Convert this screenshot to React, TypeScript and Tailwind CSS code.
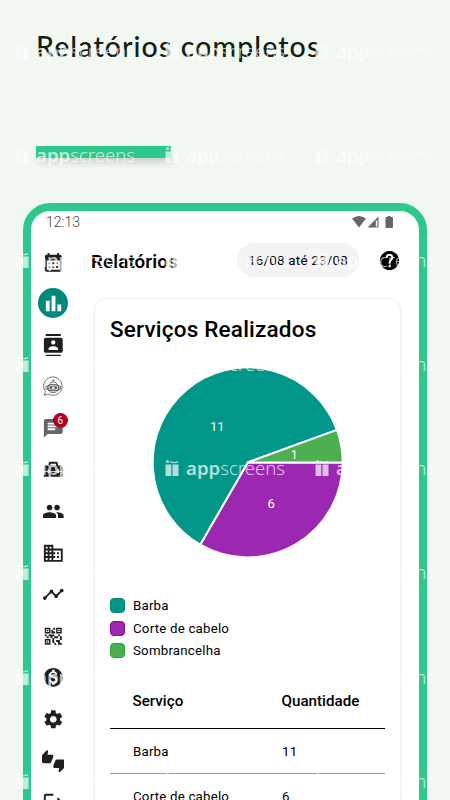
import type { ReactNode } from "react";
import {
  MdBarChart,
  MdCalendarMonth,
  MdChat,
  MdContacts,
  MdDomain,
  MdGroup,
  MdHelp,
  MdHomeRepairService,
  MdLogout,
  MdMonetizationOn,
  MdQrCode2,
  MdSettings,
  MdThumbsUpDown,
  MdTimeline,
} from "react-icons/md";

const services = [
  { name: "Barba", total: 11, swatch: "bg-[#009688] border-[#008577]" },
  { name: "Corte de cabelo", total: 6, swatch: "bg-[#9c27b0] border-[#8e00a8]" },
  { name: "Sombrancelha", total: 1, swatch: "bg-[#4caf50] border-[#1fa52a]" },
];

function RobotIcon() {
  return (
    <svg viewBox="0 0 24 24" className="size-[22.6px]" fill="none" stroke="#444" strokeWidth="0.8">
      <path d="M3.8 17.8A9.8 9.8 0 1 1 6.5 20.2L2.2 21.6Z" />
      <path d="M8 10.3q0.5-3 4-3t4 3M12 7.3V5.5M10.8 5.5h2.4" />
      <rect x="6.2" y="10.3" width="11.6" height="6.4" rx="3" strokeWidth="1.1" />
      <rect x="8" y="12" width="8" height="3" rx="1.5" />
      <path d="M6.2 11.5L4.3 12v3l1.9 0.5M17.8 11.5l1.9 0.5v3l-1.9 0.5M8.5 18.2q3.5 1 7 0" />
      <circle cx="9.6" cy="13.5" r="0.8" fill="#444" />
      <circle cx="14.4" cy="13.5" r="0.8" fill="#444" />
    </svg>
  );
}

const menu: ReactNode[] = [
  <MdCalendarMonth />,
  <div className="flex size-[30px] items-center justify-center rounded-full bg-[#00897b] text-[23px] text-white">
    <MdBarChart />
  </div>,
  <MdContacts />,
  <RobotIcon />,
  <div className="relative text-[#666]">
    <MdChat />
    <span className="absolute -top-[4px] left-[11px] flex size-[15px] items-center justify-center rounded-full bg-[#b00020] text-[10px] text-white">
      6
    </span>
  </div>,
  <MdHomeRepairService />,
  <MdGroup />,
  <MdDomain />,
  <MdTimeline />,
  <MdQrCode2 />,
  <MdMonetizationOn />,
  <MdSettings />,
  <MdThumbsUpDown />,
  <MdLogout />,
];

function Pie() {
  return (
    <svg viewBox="-94.7 -95.4 190 190" className="size-[190px]">
      <g stroke="#fff" strokeWidth="2">
        <path d="M0 0L95 0A95 95 0 0 1 -47.5 82.27Z" fill="#9c27b0" />
        <path d="M0 0L-47.5 82.27A95 95 0 1 1 89.27 -32.49Z" fill="#009688" />
        <path d="M0 0L89.27 -32.49A95 95 0 0 1 95 0Z" fill="#4caf50" />
      </g>
      <g fill="#fff" fontSize="13" textAnchor="middle">
        <text x="-30.5" y="-31">11</text>
        <text x="46.5" y="-3.5">1</text>
        <text x="23.5" y="46">6</text>
      </g>
    </svg>
  );
}

function StatusIcons() {
  return (
    <svg viewBox="0 0 42 14" className="h-[14px] w-[42px]" fill="#666">
      <path d="M0 3.5Q7 -1.5 14 3.5L7 12.5Z" />
      <path d="M26.5 1.5V12.5H15.5Z" />
      <path d="M23.8 5.5h1.5v6h-1.5z" fill="#fff" />
      <path d="M35.5 1h3v1h1.5q1 0 1 1v9q0 1-1 1h-5.5q-1 0-1-1v-9q0-1 1-1h1z" />
    </svg>
  );
}

function Mark() {
  return (
    <div className="flex h-[104.3px] w-[150px] shrink-0 items-start">
      <svg viewBox="0 0 14 18" className="mt-[5px] mr-[7px] h-[18px] w-[14px]" fill="#fff">
        <circle cx="2.5" cy="2.5" r="1.6" />
        <path d="M5 2q4 2.2 8 0v1.5q-4 1.6-8 0z" />
        <path d="M0.5 5.5h5.8V17H0.5zM7.5 5.5h6V17h-6z" />
      </svg>
      <span className="font-['Noto_Sans'] text-[18.6px] leading-[27px] text-white">
        <b className="font-semibold">app</b>
        <span className="font-light">screens</span>
      </span>
    </div>
  );
}

export default function App() {
  return (
    <div className="relative h-[800px] w-[450px] overflow-hidden bg-[#f1f8f2] font-[Roboto,sans-serif] text-black">
      <header className="h-[203px] pt-[29px] pl-9">
        <h1 className="h-[117px] font-[Lato,sans-serif] text-[28.5px] leading-[34px] font-medium tracking-[1.1px] whitespace-nowrap text-[#10200f]">
          Relatórios completos
        </h1>
        <div className="h-3 w-[135px] bg-[#2dc98c] shadow-[2px_5px_6px_rgba(0,0,0,0.15)]" />
      </header>

      <div className="ml-[23px] h-[640px] w-[404px] rounded-[27px] border-8 border-[#2dc98c] bg-white">
        <div className="flex h-[22px] items-center justify-between pr-[25px] pl-[15px] text-[14px] text-[#444]">
          <span className="font-light">12:13</span>
          <StatusIcons />
        </div>

        <div className="flex">
          <nav className="flex w-[44px] shrink-0 flex-col items-center pt-[8px] text-[22.6px] text-[#1f1f1f]">
            {menu.map((icon, i) => (
              <div key={i} className="flex h-[41.6px] shrink-0 items-center justify-center">
                {icon}
              </div>
            ))}
          </nav>

          <main className="min-w-0 flex-1 pl-[16px]">
            <div className="flex h-[54px] items-center">
              <h2 className="w-[146px] pt-[3px] text-[18.8px] leading-6 font-semibold tracking-[0.1px]">Relatórios</h2>
              <div className="flex h-[34px] w-[122px] items-center justify-center rounded-full bg-[#f3f3f3] pt-px text-[13.3px] tracking-[0.25px]">
                16/08 até 23/08
              </div>
              <MdHelp className="ml-[19px] size-[23px]" />
            </div>

            <section className="mt-[11px] ml-[3px] h-[520px] w-[307px] rounded-xl border border-[#f0f0f0] px-[15px] pt-[14px] shadow-[0_1px_2px_rgba(0,0,0,0.1)]">
              <h3 className="text-[22.5px] leading-[32px] font-medium tracking-[0.2px]">Serviços Realizados</h3>
              <div className="mt-[22px] flex justify-center">
                <Pie />
              </div>
              <ul className="mt-[37px]">
                {services.map((s) => (
                  <li key={s.name} className="flex h-[22.7px] items-center gap-2 text-[13.3px] tracking-[0.2px]">
                    <span className={`size-[15px] rounded-[4px] border ${s.swatch}`} />
                    <span className="pt-px">{s.name}</span>
                  </li>
                ))}
              </ul>
              <div className="mt-[11px] text-[13.3px] tracking-[0.2px]">
                <div className="flex h-[56px] items-center border-b border-black pt-[2px] pl-[22.5px] text-[15.2px] font-medium tracking-normal">
                  <span className="w-[149px]">Serviço</span>
                  <span>Quantidade</span>
                </div>
                {services.map((s) => (
                  <div key={s.name} className="flex h-[45.3px] items-center border-b border-[#999] pt-px pl-[23px]">
                    <span className="w-[149px]">{s.name}</span>
                    <span>{s.total}</span>
                  </div>
                ))}
              </div>
            </section>
          </main>
        </div>
      </div>

      <div className="pointer-events-none absolute top-[37px] left-[15px] flex w-[450px] flex-wrap opacity-70">
        {Array.from({ length: 24 }, (_, i) => (
          <Mark key={i} />
        ))}
      </div>
    </div>
  );
}
